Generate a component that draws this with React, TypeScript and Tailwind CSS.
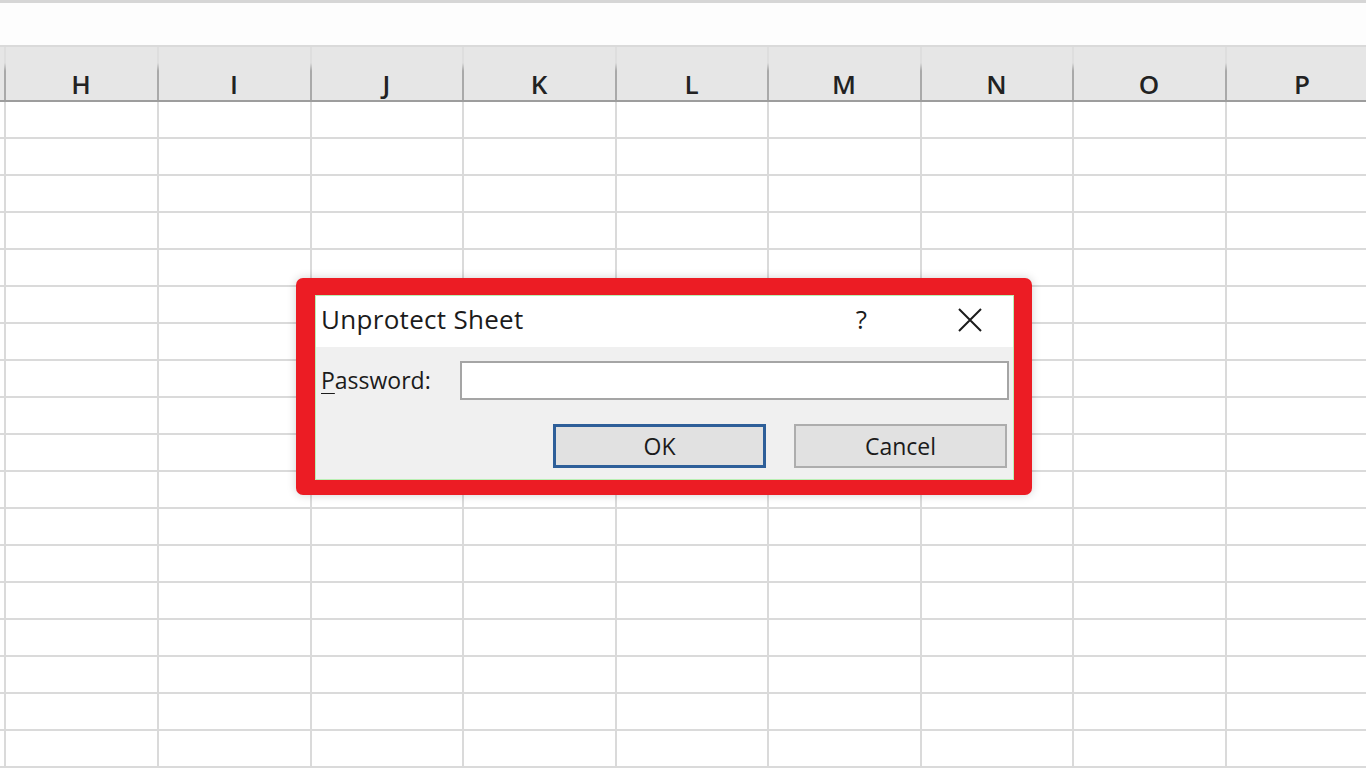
import React from "react";

const cols = ["H", "I", "J", "K", "L", "M", "N", "O", "P"];
const widths = ["w-[153px]", "w-[153px]", "w-[152px]", "w-[153px]", "w-[152px]", "w-[153px]", "w-[152px]", "w-[153px]", "w-[153px]"];

export default function App() {
  const rows = Array.from({ length: 18 });
  return (
    <div className="relative w-[1366px] h-[768px] overflow-hidden bg-white font-['Open_Sans','Noto_Sans',sans-serif]">
      <div className="h-[3px] bg-[#d6d6d6]" />
      <div className="h-[42px] bg-[#fdfdfd]" />
      <div className="h-[2px] bg-[#dadada]" />
      {/* column header */}
      <div className="flex h-[55px] bg-[#e6e6e6] border-b-2 border-[#9d9d9d] overflow-hidden">
        <div className="w-[4px] shrink-0" />
        {cols.map((c, i) => (
          <div key={c} className={`flex shrink-0 ${widths[i]}`}>
            <div className="w-[2px] h-full bg-[linear-gradient(to_bottom,#dedede_30%,#a9a9a9_45%,#a9a9a9_100%)]" />
            <div className="flex-1 flex items-center justify-center pt-[22px] text-[26px] font-semibold text-[#222] tracking-[1px]">
              {c}
            </div>
          </div>
        ))}
      </div>
      {/* grid */}
      {rows.map((_, r) => (
        <div key={r} className="flex h-[37px] border-b-2 border-[#dadada] overflow-hidden">
          <div className="w-[4px] shrink-0" />
          {cols.map((c, i) => (
            <div key={c} className={`shrink-0 ${widths[i]} border-l-2 border-[#dadada]`} />
          ))}
        </div>
      ))}

      {/* dialog with red highlight */}
      <div className="absolute left-[296px] top-[278px] w-[736px] h-[217px] rounded-[7px] bg-[#ec1c24] pt-[17px] pl-[19px] pr-[18px] pb-[15px] shadow-[0_0_10px_rgba(0,0,0,0.18)]">
        <div className="flex flex-col h-full border border-[#b9efb3]">
          <div className="flex items-center h-[51px] bg-white pl-[5px] pb-[4px]">
            <span className="text-[26px] text-[#1b1b1b] tracking-[0.3px]">Unprotect Sheet</span>
            <span className="ml-auto text-[26px] text-[#1b1b1b] mr-[90px]">?</span>
            <svg width="26" height="24" viewBox="0 0 26 24" className="mr-[30px]">
              <path d="M2 1 L24 23 M24 1 L2 23" stroke="#1b1b1b" strokeWidth="2" fill="none" />
            </svg>
          </div>
          <div className="flex-1 bg-[#f0f0f0] flex flex-col pl-[5px] pr-[4px] pt-[14px]">
            <div className="flex items-center h-[39px]">
              <span className="w-[139px] text-[23px] text-[#1b1b1b]">
                <span className="underline underline-offset-[4px] decoration-1">P</span>assword:
              </span>
              <div className="flex-1 h-[39px] bg-white border-2 border-[#a5a5a5]" />
            </div>
            <div className="flex justify-end gap-[28px] mt-[24px] pr-[2px]">
              <div className="w-[213px] h-[44px] border-[3px] border-[#2e5f99] bg-[#e1e1e1] flex items-center justify-center text-[23px] text-[#1b1b1b]">
                OK
              </div>
              <div className="w-[213px] h-[44px] border-2 border-[#adadad] bg-[#e1e1e1] flex items-center justify-center text-[23px] text-[#1b1b1b]">
                Cancel
              </div>
            </div>
          </div>
        </div>
      </div>
    </div>
  );
}
